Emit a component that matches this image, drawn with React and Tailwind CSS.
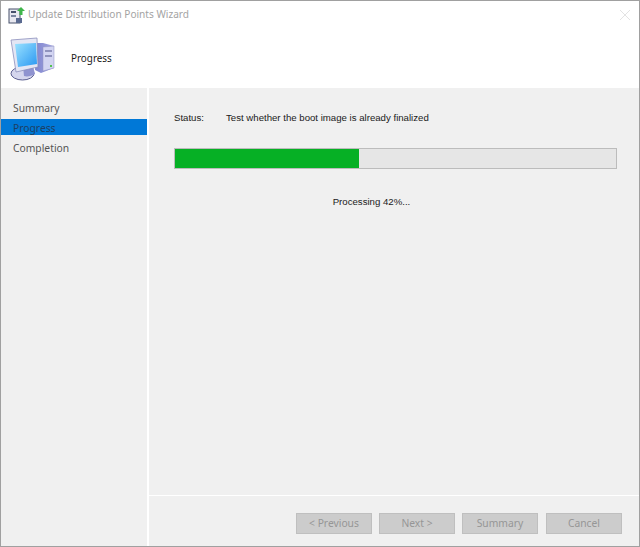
const steps = [
  { label: 'Summary', row: 'h-[20px] text-[#555555]' },
  { label: 'Progress', row: 'h-[16px] pt-[3px] bg-[#0078d7] text-[#1d3f63]' },
  { label: 'Completion', row: 'mt-[4px] h-[20px] text-[#555555]' },
];
const buttons = ['< Previous', 'Next >', 'Summary', 'Cancel'];

const WizardIcon = () => (
  <svg width="18" height="18" viewBox="0 0 18 18">
    <rect x="1" y="3" width="11" height="14" fill="#e8e8f0" stroke="#46506a" />
    <rect x="3" y="5" width="5" height="2" fill="#46506a" />
    <rect x="3" y="9" width="5" height="2" fill="#7a86a0" />
    <rect x="8" y="12" width="6" height="5" fill="#5a6a90" />
    <path d="M13 1l4 4h-2.500v4h-3V5H9z" fill="#3fb54a" />
  </svg>
);

const ComputerIcon = () => (
  <svg width="48" height="48" viewBox="0 0 48 48">
    <defs>
      <linearGradient id="screen" x1="0" y1="0" x2="1" y2="1">
        <stop offset="0" stopColor="#9be2ff" />
        <stop offset="1" stopColor="#2a98f2" />
      </linearGradient>
      <linearGradient id="tower" x1="0" y1="0" x2="1" y2="0">
        <stop offset="0" stopColor="#8085cf" />
        <stop offset="1" stopColor="#a4a7e0" />
      </linearGradient>
    </defs>
    <path d="M28 9l6 0 11 3v22l-13 5-6-3z" fill="url(#tower)" />
    <path d="M34 13l11-1v22l-11 3z" fill="#d3d5f2" stroke="#8e90c0" strokeWidth="0.500" />
    <rect x="36" y="16" width="7" height="2" fill="#9093bd" />
    <rect x="36" y="21" width="7" height="2" fill="#9093bd" />
    <rect x="41" y="31" width="2" height="2" fill="#53c24f" />
    <ellipse cx="13.500" cy="39.500" rx="11.500" ry="6.500" fill="#d5d6ee" stroke="#5c5f91" />
    <path d="M14 32h10l2 8c-3 2-8 3-11 2z" fill="#8f93d0" />
    <path d="M2 6l26-2 1 29-22 5z" fill="#e4e6f4" stroke="#8589b8" strokeWidth="0.750" />
    <path d="M6 10l21-1 1 21-19 3z" fill="url(#screen)" />
  </svg>
);

export default function App() {
  return (
    <div className="flex h-[547px] w-[640px] flex-col border border-[#a0a0a0] bg-white font-['Noto_Sans',sans-serif]">
      <div className="flex h-[27px] items-center pl-[7px]">
        <WizardIcon />
        <span className="ml-[2px] text-[10.100px] text-[#a3a3a3]">Update Distribution Points Wizard</span>
        <svg className="ml-auto mr-[9px]" width="10" height="10" viewBox="0 0 10 10">
          <path d="M0 0l10 10M10 0L0 10" stroke="#e3e3e3" />
        </svg>
      </div>

      <div className="flex h-[60px] items-center pl-[8px]">
        <ComputerIcon />
        <span className="ml-[14px] text-[9.900px] text-[#1a1a1a]">Progress</span>
      </div>

      <div className="flex flex-1 gap-[2px]">
        <div className="w-[146px] bg-[#f0f0f0] pt-[11px]">
          {steps.map((step) => (
            <div key={step.label} className={`flex items-center pl-[12px] text-[10.300px] ${step.row}`}>
              {step.label}
            </div>
          ))}
        </div>

        <div className="flex flex-1 flex-col bg-[#f0f0f0]">
          <div className="flex-1 pl-[25px] pr-[22px] pt-[23px] font-['Liberation_Sans',sans-serif] text-[9.650px] text-[#1a1a1a]">
            <div className="flex h-[14px] items-center">
              <span className="w-[52px]">Status:</span>
              <span>Test whether the boot image is already finalized</span>
            </div>
            <div className="mt-[23px] h-[21px] border border-[#bcbcbc] bg-[#e6e6e6]">
              <div className="h-full w-[184px] bg-[#06b025]" />
            </div>
            <p className="mt-[26px] pr-[48px] text-center">Processing 42%...</p>
          </div>

          <div className="flex h-[51px] justify-end gap-[7px] border-t border-white pr-[17px] pt-[17px]">
            {buttons.map((label) => (
              <button
                key={label}
                disabled
                className="h-[21px] w-[76px] border border-[#bfbfbf] bg-[#cccccc] text-[10.300px] text-[#969696] last:ml-px"
              >
                {label}
              </button>
            ))}
          </div>
        </div>
      </div>
    </div>
  );
}
